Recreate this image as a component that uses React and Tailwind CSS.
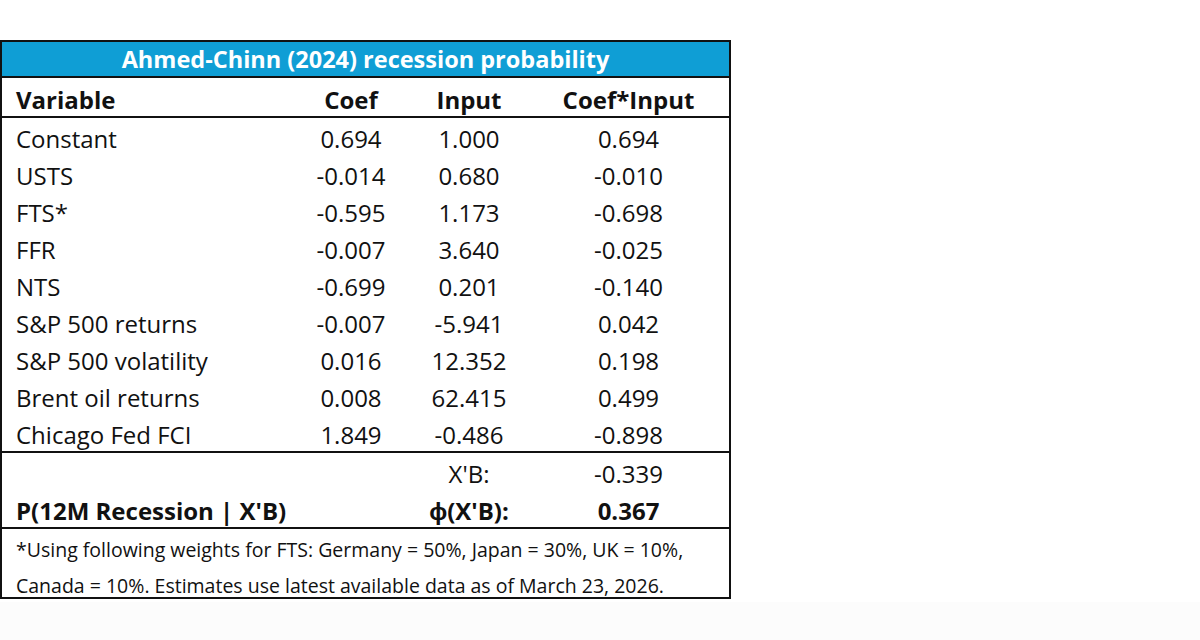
import React from "react";

const rows = [
  ["Constant", "0.694", "1.000", "0.694"],
  ["USTS", "-0.014", "0.680", "-0.010"],
  ["FTS*", "-0.595", "1.173", "-0.698"],
  ["FFR", "-0.007", "3.640", "-0.025"],
  ["NTS", "-0.699", "0.201", "-0.140"],
  ["S&P 500 returns", "-0.007", "-5.941", "0.042"],
  ["S&P 500 volatility", "0.016", "12.352", "0.198"],
  ["Brent oil returns", "0.008", "62.415", "0.499"],
  ["Chicago Fed FCI", "1.849", "-0.486", "-0.898"],
];

const grid = "grid grid-cols-[290px_118px_118px_1fr] items-center";

function App() {
  return (
    <div className="w-[1200px] h-[640px] bg-white font-['Open_Sans','Liberation_Sans',sans-serif] text-[#111] flex flex-col">
      <div className="pt-[40px] h-[602px]">
        <div className="w-[731px] border-2 border-[#111]">
          <div className="h-[36px] pt-[2px] bg-[#0f9ed5] border-b-2 border-[#111] flex items-center justify-center text-white font-bold text-[23.5px]">
            Ahmed-Chinn (2024) recession probability
          </div>
          <div className={`${grid} h-[40px] pt-[4px] border-b-2 border-[#111] font-bold text-[24px]`}>
            <div className="pl-[14px]">Variable</div>
            <div className="text-center">Coef</div>
            <div className="text-center">Input</div>
            <div className="text-center">Coef*Input</div>
          </div>
          <div className="border-b-2 border-[#111]">
            {rows.map((r) => (
              <div key={r[0]} className={`${grid} h-[37px] pt-[3px] text-[24px]`}>
                <div className="pl-[14px]">{r[0]}</div>
                <div className="text-center">{r[1]}</div>
                <div className="text-center">{r[2]}</div>
                <div className="text-center">{r[3]}</div>
              </div>
            ))}
          </div>
          <div className="border-b-2 border-[#111]">
            <div className={`${grid} h-[37px] pt-[3px] text-[24px]`}>
              <div></div>
              <div></div>
              <div className="text-center">X'B:</div>
              <div className="text-center">-0.339</div>
            </div>
            <div className={`${grid} h-[37px] pt-[3px] text-[24px] font-bold`}>
              <div className="pl-[14px] whitespace-nowrap">P(12M Recession | X'B)</div>
              <div></div>
              <div className="text-center">ϕ(X'B):</div>
              <div className="text-center">0.367</div>
            </div>
          </div>
          <div className="h-[68px] pl-[14px] pt-[3px] text-[19.5px] leading-[36px] whitespace-nowrap">
            <div>*Using following weights for FTS: Germany = 50%, Japan = 30%, UK = 10%,</div>
            <div>Canada = 10%. Estimates use latest available data as of March 23, 2026.</div>
          </div>
        </div>
      </div>
      <div className="flex-1 bg-[#fcfcfc]"></div>
    </div>
  );
}

export default App;
